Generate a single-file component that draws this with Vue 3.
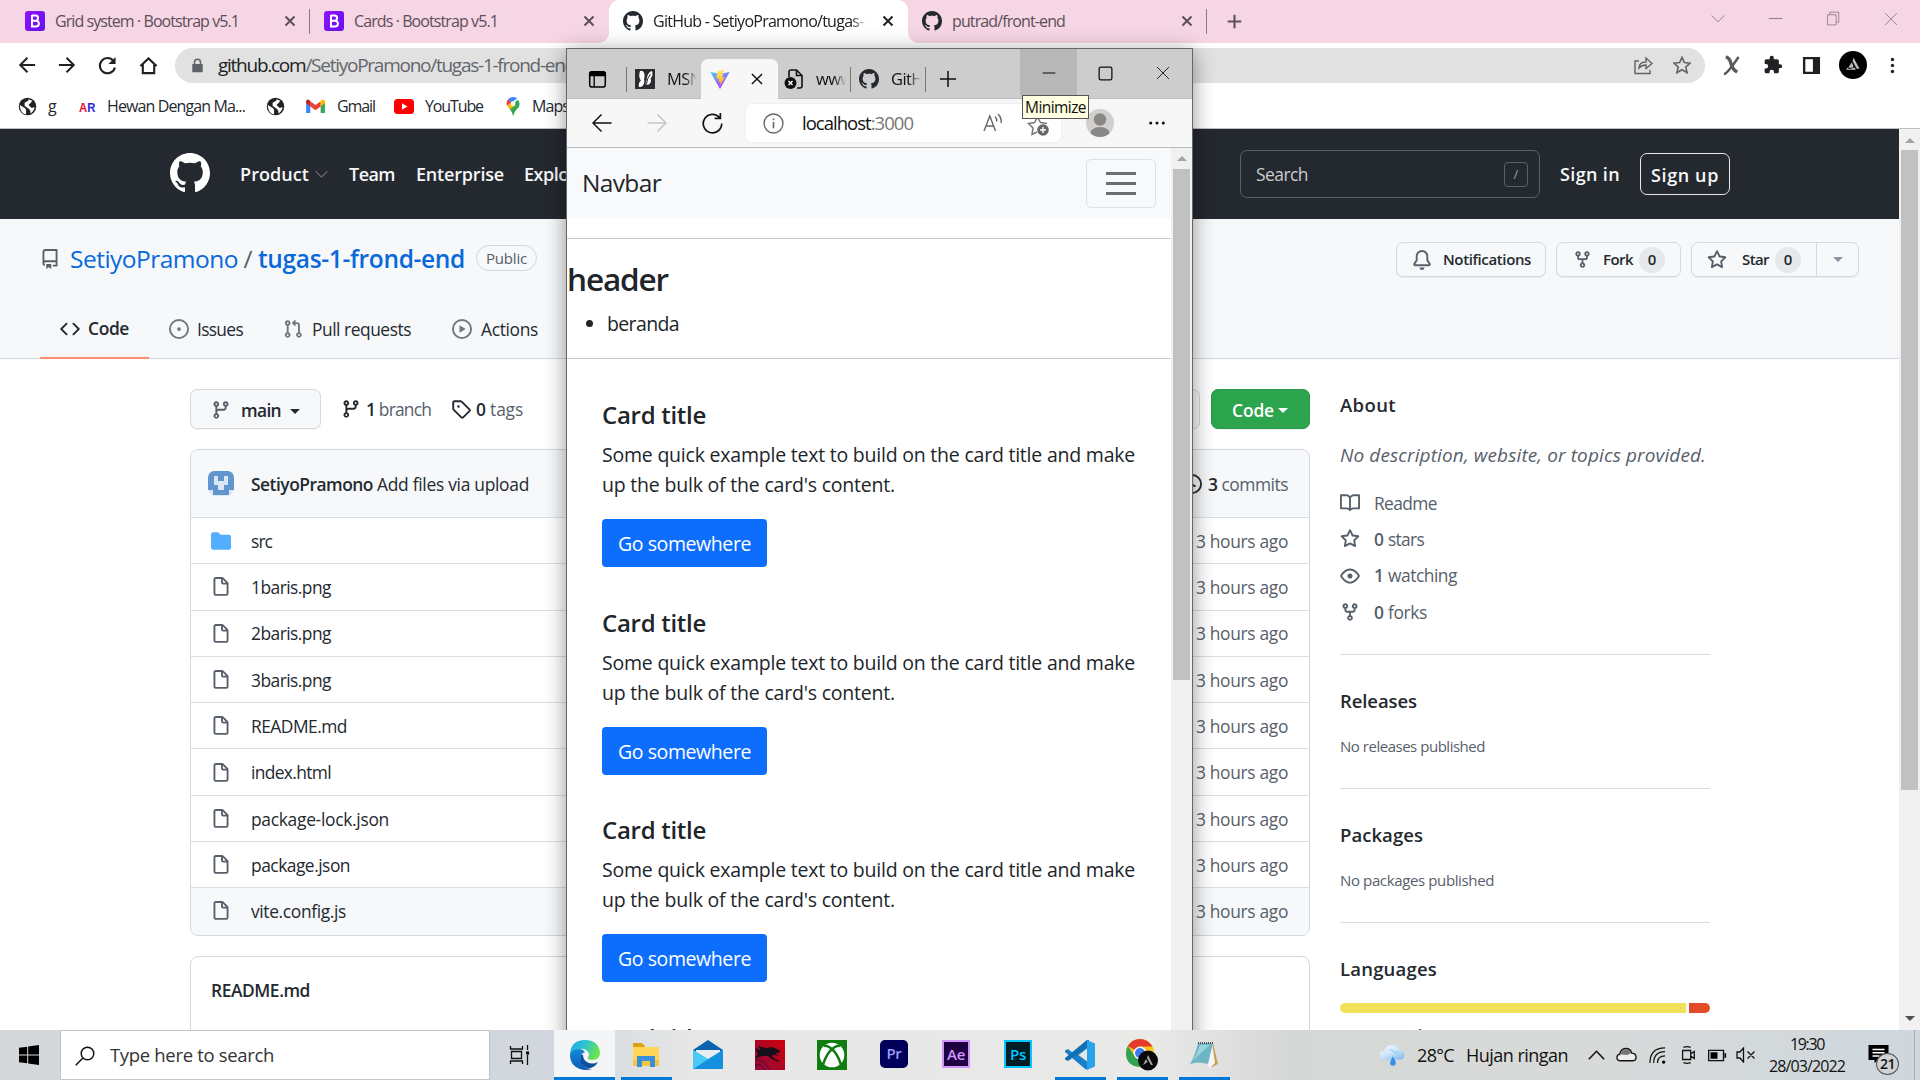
<script setup>
import { h } from 'vue'

const oct = (d) => ['0 0 16 16', `<path fill="currentColor" fill-rule="evenodd" d="${d}"/>`]
const line = (d, w = 1.5, vb = '0 0 20 20') => [vb, `<path fill="none" stroke="currentColor" stroke-width="${w}" d="${d}"/>`]

const icons = {
  github: oct('M8 0C3.58 0 0 3.58 0 8c0 3.54 2.29 6.53 5.47 7.59.4.07.55-.17.55-.38 0-.19-.01-.82-.01-1.49-2.01.37-2.53-.49-2.69-.94-.09-.23-.48-.94-.82-1.13-.28-.15-.68-.52-.01-.53.63-.01 1.08.58 1.23.82.72 1.21 1.87.87 2.33.66.07-.52.28-.87.51-1.07-1.78-.2-3.64-.89-3.64-3.95 0-.87.31-1.59.82-2.15-.08-.2-.36-1.02.08-2.12 0 0 .67-.21 2.2.82.64-.18 1.32-.27 2-.27.68 0 1.36.09 2 .27 1.53-1.04 2.2-.82 2.2-.82.44 1.1.16 1.92.08 2.12.51.56.82 1.27.82 2.15 0 3.07-1.87 3.75-3.65 3.95.29.25.54.73.54 1.48 0 1.07-.01 1.93-.01 2.2 0 .21.15.46.55.38A8.013 8.013 0 0016 8c0-4.42-3.58-8-8-8z'),
  repo: oct('M2 2.5A2.5 2.5 0 014.5 0h8.75a.75.75 0 01.75.75v12.5a.75.75 0 01-.75.75h-2.5a.75.75 0 110-1.5h1.75v-2h-8a1 1 0 00-.714 1.7.75.75 0 01-1.072 1.05A2.495 2.495 0 012 11.5v-9zm10.5-1V9h-8c-.356 0-.694.074-1 .208V2.5a1 1 0 011-1h8zM5 12.25v3.25a.25.25 0 00.4.2l1.45-1.087a.25.25 0 01.3 0L8.6 15.7a.25.25 0 00.4-.2v-3.25a.25.25 0 00-.25-.25h-3.5a.25.25 0 00-.25.25z'),
  code: oct('M4.72 3.22a.75.75 0 011.06 1.06L2.06 8l3.72 3.72a.75.75 0 11-1.06 1.06L.47 8.53a.75.75 0 010-1.06l4.25-4.25zm6.56 0a.75.75 0 10-1.06 1.06L13.94 8l-3.72 3.72a.75.75 0 101.06 1.06l4.25-4.25a.75.75 0 000-1.06l-4.25-4.25z'),
  issue: oct('M8 9.5a1.5 1.5 0 100-3 1.5 1.5 0 000 3zM8 0a8 8 0 100 16A8 8 0 008 0zM1.5 8a6.5 6.5 0 1113 0 6.5 6.5 0 01-13 0z'),
  pull: oct('M7.177 3.073L9.573.677A.25.25 0 0110 .854v4.792a.25.25 0 01-.427.177L7.177 3.427a.25.25 0 010-.354zM3.75 2.5a.75.75 0 100 1.5.75.75 0 000-1.5zm-2.25.75a2.25 2.25 0 113 2.122v5.256a2.251 2.251 0 11-1.5 0V5.372A2.25 2.25 0 011.5 3.25zM11 2.5h-1V4h1a1 1 0 011 1v5.628a2.251 2.251 0 101.5 0V5A2.5 2.5 0 0011 2.5zm1 10.25a.75.75 0 111.5 0 .75.75 0 01-1.5 0zM3.75 12a.75.75 0 100 1.5.75.75 0 000-1.5z'),
  play: oct('M1.5 8a6.5 6.5 0 1113 0 6.5 6.5 0 01-13 0zM8 0a8 8 0 100 16A8 8 0 008 0zM6.379 5.227A.25.25 0 006 5.442v5.117a.25.25 0 00.379.214l4.264-2.559a.25.25 0 000-.428L6.379 5.227z'),
  branch: oct('M11.75 2.5a.75.75 0 100 1.5.75.75 0 000-1.5zm-2.25.75a2.25 2.25 0 113 2.122V6A2.5 2.5 0 0110 8.5H6a1 1 0 00-1 1v1.128a2.251 2.251 0 11-1.5 0V5.372a2.25 2.25 0 111.5 0v1.836A2.492 2.492 0 016 7h4a1 1 0 001-1v-.628A2.25 2.25 0 019.5 3.25zM4.25 12a.75.75 0 100 1.5.75.75 0 000-1.5zM3.5 3.25a.75.75 0 111.5 0 .75.75 0 01-1.5 0z'),
  tag: oct('M2.5 7.775V2.75a.25.25 0 01.25-.25h5.025a.25.25 0 01.177.073l6.25 6.25a.25.25 0 010 .354l-5.025 5.025a.25.25 0 01-.354 0l-6.25-6.25a.25.25 0 01-.073-.177zm-1.5 0V2.75C1 1.784 1.784 1 2.75 1h5.025c.464 0 .91.184 1.238.513l6.25 6.25a1.75 1.75 0 010 2.474l-5.026 5.026a1.75 1.75 0 01-2.474 0l-6.25-6.25A1.75 1.75 0 011 7.775zM6 5a1 1 0 100 2 1 1 0 000-2z'),
  fork: oct('M5 3.25a.75.75 0 11-1.5 0 .75.75 0 011.5 0zm0 2.122a2.25 2.25 0 10-1.5 0v.878A2.25 2.25 0 005.75 8.5h1.5v2.128a2.251 2.251 0 101.5 0V8.5h1.5a2.25 2.25 0 002.25-2.25v-.878a2.25 2.25 0 10-1.5 0v.878a.75.75 0 01-.75.75h-4.5A.75.75 0 015 6.25v-.878zm3.75 7.378a.75.75 0 11-1.5 0 .75.75 0 011.5 0zm3-8.75a.75.75 0 100-1.5.75.75 0 000 1.5z'),
  star: oct('M8 .25a.75.75 0 01.673.418l1.882 3.815 4.21.612a.75.75 0 01.416 1.279l-3.046 2.97.719 4.192a.75.75 0 01-1.088.791L8 12.347l-3.766 1.98a.75.75 0 01-1.088-.79l.72-4.194L.818 6.374a.75.75 0 01.416-1.28l4.21-.611L7.327.668A.75.75 0 018 .25zm0 2.445L6.615 5.5a.75.75 0 01-.564.41l-3.097.45 2.24 2.184a.75.75 0 01.216.664l-.528 3.084 2.769-1.456a.75.75 0 01.698 0l2.77 1.456-.53-3.084a.75.75 0 01.216-.664l2.24-2.183-3.096-.45a.75.75 0 01-.564-.41L8 2.694v.001z'),
  bell: oct('M8 16a2 2 0 001.985-1.75c.017-.137-.097-.25-.235-.25h-3.5c-.138 0-.252.113-.235.25A2 2 0 008 16zM3 5a5 5 0 0110 0v2.947c0 .05.015.098.042.139l1.703 2.555A1.518 1.518 0 0113.482 13H2.518a1.518 1.518 0 01-1.263-2.36l1.703-2.554A.25.25 0 003 7.947V5zm5-3.5A3.5 3.5 0 004.5 5v2.947c0 .346-.102.683-.294.97l-1.703 2.556a.018.018 0 00-.003.01l.001.006.004.006.006.004.007.001h10.964l.007-.001.006-.004.004-.006.001-.007a.017.017 0 00-.003-.01l-1.703-2.554a1.75 1.75 0 01-.294-.97V5A3.5 3.5 0 008 1.5z'),
  book: oct('M0 1.75A.75.75 0 01.75 1h4.253c1.227 0 2.317.59 3 1.501A3.744 3.744 0 0111.006 1h4.245a.75.75 0 01.75.75v10.5a.75.75 0 01-.75.75h-4.507a2.25 2.25 0 00-1.591.659l-.622.621a.75.75 0 01-1.06 0l-.622-.621A2.25 2.25 0 005.258 13H.75a.75.75 0 01-.75-.75V1.75zm8.755 3a2.25 2.25 0 012.25-2.25H14.5v9h-3.757c-.71 0-1.4.201-1.992.572l.004-7.322zm-1.504 7.324l.004-5.073-.002-2.253A2.25 2.25 0 005.003 2.5H1.5v9h3.757a3.75 3.75 0 011.994.574z'),
  eye: oct('M1.679 7.932c.412-.621 1.242-1.75 2.366-2.717C5.175 4.242 6.527 3.5 8 3.5c1.473 0 2.824.742 3.955 1.715 1.124.967 1.954 2.096 2.366 2.717a.119.119 0 010 .136c-.412.621-1.242 1.75-2.366 2.717C10.825 11.758 9.473 12.5 8 12.5c-1.473 0-2.824-.742-3.955-1.715C2.92 9.818 2.09 8.69 1.679 8.068a.119.119 0 010-.136zM8 2c-1.981 0-3.67.992-4.933 2.078C1.797 5.169.88 6.423.43 7.1a1.619 1.619 0 000 1.798c.45.678 1.367 1.932 2.637 3.024C4.329 13.008 6.019 14 8 14c1.981 0 3.67-.992 4.933-2.078 1.27-1.091 2.187-2.345 2.637-3.023a1.619 1.619 0 000-1.798c-.45-.678-1.367-1.932-2.637-3.023C11.671 2.992 9.981 2 8 2zm0 8a2 2 0 100-4 2 2 0 000 4z'),
  clock: oct('M8 0a8 8 0 100 16A8 8 0 008 0zM1.5 8a6.5 6.5 0 1113 0 6.5 6.5 0 01-13 0zm7-3.25a.75.75 0 00-1.5 0v3.5c0 .3.15.55.4.65l2.5 1.4a.75.75 0 10.75-1.3L8.5 7.8z'),
  file: oct('M3.75 1.5a.25.25 0 00-.25.25v11.5c0 .138.112.25.25.25h8.5a.25.25 0 00.25-.25V6H9.75A1.75 1.75 0 018 4.25V1.5H3.75zm5.75.56v2.19c0 .138.112.25.25.25h2.19L9.5 2.06zM2 1.75C2 .784 2.784 0 3.75 0h5.086c.464 0 .909.184 1.237.513l3.414 3.414c.329.328.513.773.513 1.237v8.086A1.75 1.75 0 0112.25 15h-8.5A1.75 1.75 0 012 13.25V1.75z'),
  folder: oct('M1.75 1A1.75 1.75 0 000 2.75v10.5C0 14.216.784 15 1.75 15h12.5A1.75 1.75 0 0016 13.25v-8.5A1.75 1.75 0 0014.25 3h-6.5a.25.25 0 01-.2-.1l-.9-1.2c-.33-.44-.85-.7-1.4-.7h-3.5z'),
  close: line('M5 5L15 15M15 5L5 15', 2.2),
  thinClose: line('M1.5 1.5L18.5 18.5M18.5 1.5L1.5 18.5', 1.3),
  tabClose: line('M1.5 1.5L18.5 18.5M18.5 1.5L1.5 18.5', 2.4),
  plus: line('M10 2V18M2 10H18', 2.4),
  thinPlus: line('M10 1V19M1 10H19', 1.7),
  chevDown: line('M1 5L10 14L19 5', 1.4),
  chevUp: line('M1 14.500L10 5L19 14.500', 1.8),
  minus: line('M1 10H19', 1.5),
  restore: line('M2 5H13.500V18.500H2ZM5 5V1.500H17V15H13.500', 1.2),
  maximize: ['0 0 20 20', '<rect x="2.500" y="2.500" width="15" height="15" rx="2" fill="none" stroke="currentColor" stroke-width="1.500"/>'],
  back: line('M19 10H3M10.500 2L2.500 10L10.500 18', 2.2),
  forward: line('M1 10H17M9.500 2L17.500 10L9.500 18', 2.2),
  thinBack: line('M19.500 10H1.500M9.500 1.500L1 10L9.500 18.500', 1.5),
  thinForward: line('M.5 10H18.500M10.500 1.500L19 10L10.500 18.500', 1.5),
  reload: ['0 0 20 20', '<path fill="none" stroke="currentColor" stroke-width="2.200" d="M16.500 5.500A8 8 0 1 0 17.800 12"/><path fill="currentColor" d="M18.500 1V8.500H11Z"/>'],
  thinReload: line('M16.800 4.500A8.800 8.800 0 1 0 18.800 10M17.500 0V5.200H12', 1.6),
  home: line('M1.500 10.500L10 2.500L18.500 10.500M4 8.500V18H16V8.500', 2.2),
  lock: ['0 0 20 20', '<path fill="currentColor" d="M4 8H16Q17 8 17 9V18Q17 19 16 19H4Q3 19 3 18V9Q3 8 4 8Z"/><path fill="none" stroke="currentColor" stroke-width="2" d="M6 9V5.500A4 4 0 0 1 14 5.500V9"/>'],
  share: line('M6 6H2V18.500H17V15M6 13Q6 7 13 7V3L19 8.500L13 13.500V10Q8.500 10 6 13Z', 1.4),
  starLine: line('M10 1.500L12.600 7.300L19 8L14.200 12.200L15.600 18.500L10 15.200L4.400 18.500L5.800 12.200L1 8L7.400 7.300Z', 1.8),
  xmark: ['0 0 20 20', '<path fill="none" stroke="#5a5a5a" stroke-width="3.600" d="M4 1Q8 2 9.500 8T16 17"/><path fill="none" stroke="#5a5a5a" stroke-width="2.600" d="M17.500 1Q12 9 8 14T2 19"/>'],
  puzzle: ['0 0 24 24', '<path fill="currentColor" d="M20.500 11H19V7a2 2 0 0 0-2-2h-4V3.500a2.500 2.500 0 0 0-5 0V5H4a2 2 0 0 0-2 2v3.800h1.500a2.700 2.700 0 0 1 0 5.400H2V20a2 2 0 0 0 2 2h3.800v-1.500a2.700 2.700 0 0 1 5.400 0V22H17a2 2 0 0 0 2-2v-4h1.500a2.500 2.500 0 0 0 0-5z"/>'],
  panel: ['0 0 20 20', '<path fill="currentColor" fill-rule="evenodd" d="M1 1H19V19H1ZM3.500 3.500V16.500H11.500V3.500Z"/>'],
  profile: ['0 0 30 30', '<circle cx="15" cy="15" r="15" fill="#000"/><path fill="#bbb" d="M15.500 7L22 19H19L14.500 11ZM13.500 12L15.500 16L13.500 19H9.500ZM7.500 20H18L17 18H9Z"/>'],
  dotsV: ['0 0 20 20', '<g fill="currentColor"><circle cx="10" cy="3" r="2"/><circle cx="10" cy="10" r="2"/><circle cx="10" cy="17" r="2"/></g>'],
  dotsH: ['0 0 20 20', '<g fill="currentColor"><circle cx="3" cy="10" r="1.700"/><circle cx="10" cy="10" r="1.700"/><circle cx="17" cy="10" r="1.700"/></g>'],
  bootstrap: ['0 0 20 20', '<defs><linearGradient id="bs" x2="1" y2="1"><stop stop-color="#9013fe"/><stop offset="1" stop-color="#6610f2"/></linearGradient></defs><rect width="20" height="20" rx="3" fill="url(#bs)"/><path fill="none" stroke="#fff" stroke-width="2" d="M7 4.500H10.500A2.600 2.600 0 0 1 10.500 9.700H7M7 9.700H11A2.900 2.900 0 0 1 11 15.500H7ZM7 4V16"/>'],
  globe: ['0 0 20 20', '<circle cx="10" cy="10" r="9.200" fill="#202124"/><path fill="#fff" d="M2 8.500L7 11.500Q8.500 12.500 8.500 14V18.300Q2.500 17 2 10ZM7 6L11 3.800V2.300L15 4L13 6.500L11 8.500L14.500 11.500L17.500 10.500Q17 15 13 17.300V14.500L11 12L7 9.500Z"/>'],
  ar: ['0 0 22 20', '<text x="0" y="15.500" font-family="Liberation Sans,sans-serif" font-weight="700" font-size="14" textLength="18" lengthAdjust="spacingAndGlyphs"><tspan fill="#e8112d">A</tspan><tspan fill="#2b2bd8">R</tspan></text>'],
  gmail: ['0 0 20 16', '<path fill="#4285f4" d="M0 2V15H4.500V6Z"/><path fill="#34a853" d="M20 2V15H15.500V6Z"/><path fill="#ea4335" d="M4.500 2.500V8L10 12L15.500 8V2.500L10 6.500Z"/><path fill="#c5221f" d="M0 2.500Q.5-.5 3 .800L4.500 2V7.800L0 4.500Z"/><path fill="#fbbc04" d="M20 2.500Q19.500-.5 17 .800L15.500 2V7.800L20 4.500Z"/>'],
  youtube: ['0 0 20 15', '<rect width="20" height="15" rx="3.500" fill="#f00"/><path fill="#fff" d="M8 4.200L13.500 7.500L8 10.800Z"/>'],
  maps: ['0 0 14 20', '<path fill="#34a853" d="M7 20Q6 15 3.500 12.500L11.500 3Q14 4 14 7.500Q14 10 11 13Q8.500 15.500 7 20Z"/><path fill="#fbbc04" d="M3.500 13Q1.500 10.500 .8 9L5 5.500L9.500 9Z"/><path fill="#ea4335" d="M.8 9Q-.8 5 2 2L5.500 5.500Z"/><path fill="#4285f4" d="M2 2Q6-1.500 11.500 1.200L5.300 6Z"/><circle cx="7" cy="7" r="2.500" fill="#fff"/>'],
  workspace: ['0 0 20 20', '<rect x="1.800" y="2" width="16.400" height="16" rx="2.500" fill="none" stroke="#000" stroke-width="1.600"/><path d="M1 6.500V4Q1 1 4 1H16Q19 1 19 4V6.500Z"/><path stroke="#000" stroke-width="1.400" d="M6.500 6V18"/>'],
  msn: ['0 0 20 20', '<rect width="20" height="20" fill="#2b2d31"/><path fill="#fff" d="M5 2Q9 1 9.500 6Q9.800 8 9 10Q10 12 9 14.500Q7.500 18.500 4 18Q3 14 6 11.500Q3 8 5 2ZM17 2Q18.500 6.500 15.500 9.500Q17 12 15 14.500Q12.500 17 10.500 14.500Q12 11 12 8.500Q13 3 17 2Z"/><path fill="none" stroke="#2b2d31" stroke-width="1" d="M15.500 5Q12 9 11.500 15"/>'],
  vite: ['0 0 20 20', '<defs><linearGradient id="vt" x2=".6" y2="1"><stop stop-color="#41d1ff"/><stop offset="1" stop-color="#bd34fe"/></linearGradient><linearGradient id="vl" x2="0" y2="1"><stop stop-color="#ffea83"/><stop offset="1" stop-color="#ffa800"/></linearGradient></defs><path fill="url(#vt)" d="M.3 3L10 20L19.700 3L10.500 4.700Z"/><path fill="url(#vl)" d="M14 .5L7 2L6.500 10L9 9.500L8.500 13L10.500 12.500L9.500 17L15 8L12.300 8.500Z"/>'],
  badPage: ['0 0 20 20', '<path fill="none" stroke="#111" stroke-width="1.600" d="M5 8V3Q5 1 7 1H12.500L18 6.500V17Q18 19 16 19H13M12.500 1V6.500H18"/><circle cx="6.500" cy="14" r="6" fill="#111"/><path stroke="#fff" stroke-width="1.400" d="M4.500 12L8.500 16M8.500 12L4.500 16"/>'],
  info: ['0 0 20 20', '<circle cx="10" cy="10" r="9" fill="none" stroke="currentColor" stroke-width="1.300"/><path stroke="currentColor" stroke-width="1.500" d="M10 8.500V14.500M10 5.200V7"/>'],
  readAloud: ['0 0 20 20', '<path fill="none" stroke="currentColor" stroke-width="1.400" d="M1 18L6.800 3L12.500 18M3 13H10.800M12 3.500Q14 5.500 13.700 8.500M15 1Q19 5 18 10"/>'],
  favAdd: ['0 0 22 22', '<path fill="none" stroke="#767676" stroke-width="1.500" d="M10 18L5 20.500L6 14L1.500 9.500L7.500 8.500L10.500 3L13.500 8.500L20 9.500"/><circle cx="16" cy="16" r="5.800" fill="#666"/><path stroke="#fff" stroke-width="1.400" d="M16 13V19M13 16H19"/>'],
  person: ['0 0 28 28', '<clipPath id="pc"><circle cx="14" cy="14" r="14"/></clipPath><g clip-path="url(#pc)"><rect width="28" height="28" fill="#d2d0ce"/><circle cx="14" cy="10.500" r="6.200" fill="#8a8886"/><ellipse cx="14" cy="25" rx="10" ry="7" fill="#8a8886"/></g>'],
  avatar: ['0 0 28 28', '<rect x="1" y="1" width="26" height="25" rx="8" fill="#d9e6f5"/><path fill="#6095ce" fill-rule="evenodd" d="M7 1H21Q27 2 27 8V20H22V25H6V20H1V8Q1 2 7 1ZM7 6V15H11V20H17V15H21V6H17V11H11V6Z"/>'],
  windows: ['0 0 20 20', '<path d="M0 2.800L8.200 1.700V9.500H0ZM9.200 1.500L20 0V9.500H9.200ZM0 10.500H8.200V18.300L0 17.200ZM9.200 10.500H20V20L9.200 18.500Z"/>'],
  search: ['0 0 20 20', '<circle cx="12.500" cy="7.500" r="6.300" fill="none" stroke="#111" stroke-width="1.500"/><path stroke="#111" stroke-width="1.500" d="M8 12L.7 19.300"/>'],
  taskview: ['0 0 20 20', '<path fill="none" stroke="#111" stroke-width="1.300" d="M1 1V4H13V1M1 19V16H13V19M2 6.500H12V13.500H2ZM18 0V5M18 10V20"/><rect x="16.600" y="6.500" width="3" height="3"/>'],
  edge: ['0 0 30 30', '<defs><linearGradient id="eg" x2="1" y2=".4"><stop stop-color="#1fa3e8"/><stop offset=".5" stop-color="#2cc3d5"/><stop offset="1" stop-color="#6be34f"/></linearGradient><linearGradient id="eb" x2="0" y2="1"><stop stop-color="#1489d8"/><stop offset="1" stop-color="#0a5bb5"/></linearGradient></defs><path fill="url(#eg)" d="M0 14Q1 0 15 0Q28 0 30 12Q30 20 22 20Q17 20 18 17Q20 15 18 12Q15 8 10 9Q3 10 0 16Z"/><path fill="url(#eb)" d="M0 16Q1 9 9 9Q13 9 15 12Q10 14 11 20Q13 29 22 29Q16 31 10 29Q0 25 0 16Z"/><path fill="#0d4f9e" d="M11 15Q9 25 17 28Q24 29 28 22Q22 25 17 22Q13 20 13 15Z"/>'],
  explorer: ['0 0 28 26', '<path fill="#e0a013" d="M1 1H10L13 4V8H1Z"/><path fill="#ffd65a" d="M1 5H27V24H1Z"/><path fill="#f8c63d" d="M1 18H27V24H1Z"/><path fill="#3a8fd9" d="M5 14H23V25H18V19H10V25H5Z"/>'],
  mail: ['0 0 30 30', '<path fill="#0a64ad" d="M0 10L15 0L30 10V13H0Z"/><path fill="#e9eef2" d="M3 10H27V18H3Z"/><path fill="#35b8f1" d="M0 10L15 19L30 10V29H0Z"/><path fill="#1490df" d="M0 29L30 10V29Z"/><path fill="#4cc9f7" d="M0 10L15 19L0 29Z"/>'],
  dragon: ['0 0 30 30', '<defs><linearGradient id="dg" x1="1" x2="0" y2="1"><stop stop-color="#d0000b"/><stop offset="1" stop-color="#8d0b3c"/></linearGradient></defs><rect width="30" height="30" fill="url(#dg)"/><path fill="#17101a" d="M0 8L6 10L3 6Q9 8 12 8L16 7L20 8L25 11L24 13L20 13L24 16L18 14.500Q16 17 20 19Q24 20 25 22Q17 20 13 16L8 16L0 18L3 14Z"/><path fill="none" stroke="#4d0a3a" d="M0 20Q8 18 14 29M0 25Q6 23 10 30"/>'],
  xbox: ['0 0 30 30', '<rect width="30" height="30" fill="#107c10"/><circle cx="15" cy="15" r="12.300" fill="#fff"/><path fill="none" stroke="#107c10" stroke-width="2.400" d="M6.500 5.500Q11 5.500 15 9Q20.500 14 24 24.500M23.500 5.500Q19 5.500 15 9Q9.500 14 6 24.500"/>'],
  vscode: ['0 0 30 30', '<path fill="#1a7fc6" d="M22 0L8 13L3 9L0 10.500V12L19 28L22 30L24 22V8Z"/><path fill="#1070b3" d="M0 18V19.500L3 21L24 6V0H22Z"/><path fill="#2aa3ee" d="M22 0L30 3.500V26.500L22 30Z"/><path fill="#e6e6e6" d="M22 8.500V21.500L13.500 15Z"/>'],
  chrome: ['0 0 32 32', '<circle cx="14" cy="14" r="14" fill="#fbc116"/><path fill="#e33b2e" d="M14 14L1.800 7Q6 0 14 0Q22 0 26.500 7.500H14Z"/><path fill="#31a350" d="M14 28Q0 27 0 14Q0 10 1.800 7L9 17.500L16 20Z"/><circle cx="14" cy="14" r="6.500" fill="#fff"/><circle cx="14" cy="14" r="5" fill="#3b7ded"/><circle cx="22" cy="21.500" r="10" fill="#0a0a0a"/><path fill="#aaa" d="M22 16L27 26H25L21 19ZM20 20L21.500 23L17 26Z"/>'],
  notepad: ['0 0 28 28', '<path fill="#c8a252" d="M23 2L28 23L22 26L17 23Z"/><path fill="#f4f6f7" d="M22 2L25 22L20 27L16 22Z"/><path fill="#6fb6c5" d="M8 2H23L18 23Q8 20 0 23Q5 15 8 2Z"/><path fill="#9cd3de" d="M10 4L20 4Q10 12 3 20Q7 13 10 4Z"/><path stroke="#555" stroke-dasharray="1 1" stroke-width="2" d="M8 2H24"/>'],
  weather: ['0 0 26 22', '<defs><linearGradient id="wc" x2=".7" y2="1"><stop stop-color="#f4fbff"/><stop offset=".55" stop-color="#cfe7fa"/><stop offset="1" stop-color="#8fc1ee"/></linearGradient></defs><path fill="url(#wc)" d="M6 15.500Q0 15.500 0 10.500Q0 6.500 5 6Q7 0 13 0Q19 0 20.500 5Q26 5.500 26 10.500Q26 15.500 21 15.500Z"/><path fill="#a5d0f3" d="M9 5Q13 3 16 7Q20 5 23 8Q18 7 16 10Q13 5 9 5Z"/><path fill="#3292e8" d="M14 12Q17 17 17 18.700A3 3 0 0 1 11 18.700Q11 17 14 12Z"/>'],
  cloud: ['0 0 22 16', '<path fill="#eee" stroke="#111" stroke-width="1.400" d="M5 14Q1 14 1 10.500Q1 7.500 4 7Q5 1.500 10 1.200Q15 1 16.500 6Q21 6 21 10.500Q21 14 17 14Z"/><path fill="#777" d="M2 10Q3 7.500 6 7.500L12 8Q14 6 16 6.500Q14 2 10 2Q6 2 5 7Z"/>'],
  wifi: ['0 0 18 18', '<g fill="none" stroke="#111" stroke-width="1.300"><path d="M1 17Q1 1 17 1M5 17Q5 5 17 5M9 17Q9 9.500 17 9.500"/></g><circle cx="15.500" cy="16" r="1.800"/>'],
  meet: ['0 0 18 20', '<path fill="none" stroke="#111" stroke-width="1.400" d="M3 5H12V15H3ZM12 9L16 6V14L12 11M4 1.500Q8 0 12 1.500M4 18.500Q8 20 12 18.500"/>'],
  battery: ['0 0 20 14', '<path fill="none" stroke="#111" stroke-width="1.400" d="M1 1.500H17V12.500H1Z"/><path d="M3 3.500H10.500V10.500H3ZM18 4.500H19.800V9.500H18Z"/>'],
  volume: ['0 0 20 16', '<path fill="none" stroke="#111" stroke-width="1.300" d="M1 5H4L7.500 1V15L4 11H1ZM11.500 4.500L18.500 11.500M18.500 4.500L11.500 11.500"/>'],
  action: ['0 0 20 18', '<path d="M0 0H20V15H10L6 18V15H0Z"/><path stroke="#fff" stroke-width="1.400" d="M4 4.500H16M4 7.700H16M4 11H11"/>'],
}

const Icon = ({ name, w = 20, ht }) =>
  h('svg', { class: 'ico', viewBox: icons[name][0], width: w, height: ht ?? w, innerHTML: icons[name][1] })
Icon.props = ['name', 'w', 'ht']

// Tracks a label out (or in) so that it fills the given width in pixels.
const vFit = {
  mounted(el, { value }) {
    const width = el.getBoundingClientRect().width
    const count = el.textContent.length
    el.style.letterSpacing = `${((value - width) / count).toFixed(3)}px`
  },
}

const tabs = [
  { icon: 'bootstrap', title: 'Grid system · Bootstrap v5.1', w: 184, sep: true },
  { icon: 'bootstrap', title: 'Cards · Bootstrap v5.1', w: 144 },
  { icon: 'github', title: 'GitHub - SetiyoPramono/tugas-1', w: 219, active: true },
  { icon: 'github', title: 'putrad/front-end', w: 113, sep: true },
]
const files = [
  ['src', 21], ['1baris.png', 80], ['2baris.png', 80], ['3baris.png', 80], ['README.md', 96],
  ['index.html', 80], ['package-lock.json', 138], ['package.json', 99], ['vite.config.js', 95],
]
const facts = [
  { icon: 'book', text: 'Readme', w: 63 },
  { icon: 'star', n: '0', text: 'stars', w: 36 },
  { icon: 'eye', n: '1', text: 'watching', w: 69 },
  { icon: 'fork', n: '0', text: 'forks', w: 39 },
]
const apps = [
  { icon: 'edge', w: 30, state: 'active' },
  { icon: 'explorer', w: 28, state: 'open' },
  { icon: 'mail', w: 30 },
  { icon: 'dragon', w: 30 },
  { icon: 'xbox', w: 30 },
  { label: 'Pr', kind: 'pr' },
  { label: 'Ae', kind: 'ae' },
  { label: 'Ps', kind: 'ps' },
  { icon: 'vscode', w: 30, state: 'open' },
  { icon: 'chrome', w: 32, state: 'open' },
  { icon: 'notepad', w: 28, state: 'open' },
]
</script>

<template>
  <div class="desktop">
    <main class="chrome">
      <div class="tabstrip">
        <div v-for="t in tabs" :key="t.title" class="tab" :class="{ active: t.active, sep: t.sep }">
          <Icon :name="t.icon" />
          <span class="tab-title"><span v-fit="t.w">{{ t.title }}</span></span>
          <Icon name="close" w="18" />
        </div>
        <Icon name="plus" w="17" class="newtab" />
        <div class="wincontrols">
          <Icon name="chevDown" w="14" /><Icon name="minus" w="15" /><Icon name="restore" w="15" /><Icon name="thinClose" w="14" />
        </div>
      </div>
      <div class="toolbar">
        <div class="navicons"><Icon name="back" w="18" /><Icon name="forward" w="18" /><Icon name="reload" w="19" /><Icon name="home" w="19" /></div>
        <div class="omnibox">
          <Icon name="lock" w="15" />
          <span class="url" v-fit="357">github.com<span>/SetiyoPramono/tugas-1-frond-end</span></span>
          <Icon name="share" w="20" class="push" /><Icon name="starLine" w="18" class="fav" />
        </div>
        <div class="exts">
          <Icon name="xmark" w="19" ht="21" /><Icon name="puzzle" w="20" /><Icon name="panel" w="19" /><Icon name="profile" w="28" /><Icon name="dotsV" w="17" />
        </div>
      </div>
      <div class="bookmarks">
        <Icon name="globe" w="19" /><span>g</span>
        <Icon name="ar" w="20" /><span><span v-fit="138">Hewan Dengan Ma...</span></span>
        <Icon name="globe" w="19" />
        <Icon name="gmail" w="19" ht="15" /><span><span v-fit="38">Gmail</span></span>
        <Icon name="youtube" w="20" ht="15" /><span><span v-fit="58">YouTube</span></span>
        <Icon name="maps" w="14" ht="19" /><span><span v-fit="37">Maps</span></span>
      </div>

      <div class="viewport">
        <div class="page">
          <header class="gh-header">
            <Icon name="github" w="40" />
            <b><span v-fit="69">Product</span></b><Icon name="chevDown" w="13" class="dim" />
            <b><span v-fit="46">Team</span></b>
            <b><span v-fit="88">Enterprise</span></b>
            <b><span v-fit="62">Explore</span></b>
            <div class="gh-search"><span v-fit="52">Search</span><i>/</i></div>
            <b><span v-fit="60">Sign in</span></b>
            <div class="signup"><span v-fit="68">Sign up</span></div>
          </header>

          <section class="repohead">
            <div class="repotitle">
              <Icon name="repo" w="20" />
              <a><span v-fit="168">SetiyoPramono</span></a><span class="slash">/</span>
              <a class="strong"><span v-fit="207">tugas-1-frond-end</span></a>
              <span class="pill"><span v-fit="41">Public</span></span>
              <div class="actions">
                <div class="btn notif"><Icon name="bell" w="20" /><span v-fit="88">Notifications</span></div>
                <div class="btn forkbtn"><Icon name="fork" w="19" /><span v-fit="30">Fork</span><em>0</em></div>
                <div class="btn starbtn"><Icon name="star" w="20" /><span v-fit="27">Star</span><em>0</em><div class="drop"><s class="caret"></s></div></div>
              </div>
            </div>
            <nav class="repotabs">
              <span class="on"><Icon name="code" w="20" /><span v-fit="41">Code</span></span>
              <span><Icon name="issue" w="20" /><span v-fit="46">Issues</span></span>
              <span><Icon name="pull" w="20" /><span v-fit="99">Pull requests</span></span>
              <span><Icon name="play" w="20" /><span v-fit="57">Actions</span></span>
            </nav>
          </section>

          <div class="content">
            <div class="maincol">
              <div class="filenav">
                <div class="btn mainbtn"><Icon name="branch" w="20" /><span v-fit="40">main</span><s class="caret"></s></div>
                <Icon name="branch" w="20" class="ink" /><span class="cnt"><span v-fit="65"><b>1</b> branch</span></span>
                <Icon name="tag" w="20" class="ink" /><span class="cnt"><span v-fit="47"><b>0</b> tags</span></span>
                <div class="btn goto"></div>
                <div class="btn green"><span v-fit="42">Code</span><s class="caret"></s></div>
              </div>
              <div class="files">
                <div class="commit">
                  <Icon name="avatar" w="28" />
                  <b><span v-fit="122">SetiyoPramono</span></b><span v-fit="152">Add files via upload</span>
                  <Icon name="clock" w="20" class="push" /><span class="cnt" v-fit="80"><b>3</b> commits</span>
                </div>
                <div v-for="(f, i) in files" :key="f[0]" class="file">
                  <Icon :name="i ? 'file' : 'folder'" w="20" :class="i ? 'doc' : 'dir'" />
                  <span class="fname"><span v-fit="f[1]">{{ f[0] }}</span></span>
                  <span class="ago"><span v-fit="92">3 hours ago</span></span>
                </div>
              </div>
              <div class="readme"><span v-fit="99">README.md</span></div>
            </div>

            <aside class="side">
              <h3><span v-fit="56">About</span></h3>
              <p class="desc"><span v-fit="366">No description, website, or topics provided.</span></p>
              <div class="facts">
                <div v-for="f in facts" :key="f.text"><Icon :name="f.icon" w="20" /><b v-if="f.n">{{ f.n }}</b><span v-fit="f.w">{{ f.text }}</span></div>
              </div>
              <section><h3><span v-fit="77">Releases</span></h3><p><span v-fit="145">No releases published</span></p></section>
              <section><h3><span v-fit="83">Packages</span></h3><p><span v-fit="154">No packages published</span></p></section>
              <section>
                <h3><span v-fit="97">Languages</span></h3>
                <div class="langbar"><i></i><i></i></div>
                <div class="langs"><i></i><b>JavaScript</b> 94.3%<i class="html"></i><b>HTML</b> 5.7%</div>
              </section>
            </aside>
          </div>
        </div>
        <div class="scroll"><s class="up"></s><div class="thumb"></div><s class="down"></s></div>
      </div>
    </main>

    <div class="edge">
      <div class="etabs">
        <Icon name="workspace" w="19" /><i class="bar"></i>
        <Icon name="msn" w="20" /><span class="fade"><span>MSN</span></span>
        <div class="etab"><Icon name="vite" w="20" /><Icon name="tabClose" w="12" /></div>
        <Icon name="badPage" w="20" /><span class="fade"><span>www</span></span><i class="bar"></i>
        <Icon name="github" w="20" class="ink" /><span class="fade"><span>GitHu</span></span><i class="bar"></i>
        <Icon name="thinPlus" w="18" />
        <div class="wbtn hover"><Icon name="minus" w="14" /></div>
        <div class="wbtn"><Icon name="maximize" w="17" /></div>
        <div class="wbtn"><Icon name="thinClose" w="14" /></div>
      </div>
      <div class="ebar">
        <Icon name="thinBack" w="20" /><Icon name="thinForward" w="20" class="off" /><Icon name="thinReload" w="21" />
        <div class="eaddr">
          <Icon name="info" w="21" /><span class="host"><span v-fit="111">localhost<i>:3000</i></span></span>
          <Icon name="readAloud" w="20" /><Icon name="favAdd" w="22" />
        </div>
        <Icon name="person" w="28" /><Icon name="dotsH" w="18" />
      </div>
      <div class="ebody">
        <div class="app">
          <div class="navbar"><span v-fit="79">Navbar</span><div class="burger"><i></i><i></i><i></i></div></div>
          <div class="head">
            <h2><span v-fit="101">header</span></h2>
            <ul><li><span v-fit="72">beranda</span></li></ul>
          </div>
          <div class="cards">
            <article v-for="n in 4" :key="n">
              <h5><span v-fit="104">Card title</span></h5>
              <p><span v-fit="533">Some quick example text to build on the card title and make</span><br><span v-fit="293">up the bulk of the card's content.</span></p>
              <div class="go"><span v-fit="133">Go somewhere</span></div>
            </article>
          </div>
        </div>
        <div class="scroll"><s class="up"></s><div class="thumb"></div></div>
      </div>
      <div class="tip"><span v-fit="61">Minimize</span></div>
    </div>

    <footer class="taskbar">
      <div class="start"><Icon name="windows" w="20" /></div>
      <div class="tsearch"><Icon name="search" w="20" /><span v-fit="164">Type here to search</span></div>
      <div class="tview"><Icon name="taskview" w="21" ht="20" /></div>
      <div v-for="(a, i) in apps" :key="i" class="app-slot" :class="a.state">
        <Icon v-if="a.icon" :name="a.icon" :w="a.w" />
        <div v-else class="adobe" :class="a.kind">{{ a.label }}</div>
      </div>
      <div class="tray">
        <Icon name="weather" w="26" ht="21" />
        <span><span v-fit="37">28°C</span></span><span><span v-fit="102">Hujan ringan</span></span>
        <Icon name="chevUp" w="17" /><Icon name="cloud" w="21" ht="16" /><Icon name="wifi" w="17" /><Icon name="meet" w="18" /><Icon name="battery" w="20" ht="13" /><Icon name="volume" w="20" ht="16" />
        <div class="clock"><span v-fit="34">19:30</span><span v-fit="76">28/03/2022</span></div>
        <div class="notes"><Icon name="action" w="21" ht="18" /><i>21</i></div>
      </div>
    </footer>
  </div>
</template>

<style>
body { margin: 0; overflow: hidden; }
</style>

<style scoped>
* { box-sizing: border-box; }
.desktop { position: relative; width: 1920px; height: 1080px; overflow: hidden; background: #fff; color: #24292f; font: 400 17.4px/1.3 "Open Sans", "Noto Sans", sans-serif; white-space: nowrap; display: flex; flex-direction: column; }
.desktop i, .desktop em { font-style: normal; }
.ico { display: block; flex: none; }
.push { margin-left: auto; }
.ink { color: #24292f; }

.chrome { height: 1030px; display: flex; flex-direction: column; overflow: hidden; }
.tabstrip { height: 43px; flex: none; display: flex; align-items: center; background: #f6d5e4; padding: 0 0 0 11px; color: #5c4f57; }
.tab { position: relative; width: 299px; height: 43px; padding: 0 11px 1px 14px; display: flex; align-items: center; gap: 10px; font-size: 16px; }
.tab > .ico:first-child { color: #24292f; }
.tab.active { background: #fff; color: #202124; border-radius: 10px 10px 0 0; }
.tab.active::before, .tab.active::after { content: ""; position: absolute; bottom: 0; width: 10px; height: 10px; }
.tab.active::before { left: -10px; background: radial-gradient(circle at 0 0, transparent 9.5px, #fff 10px); }
.tab.active::after { right: -10px; background: radial-gradient(circle at 100% 0, transparent 9.5px, #fff 10px); }
.tab.active .tab-title { mask-image: linear-gradient(to right, #000 92%, transparent 99%); }
.tab.sep::after { content: ""; position: absolute; right: 0; top: 9px; width: 1px; height: 25px; background: #8d7a84; }
.tab-title { flex: 1; overflow: hidden; }
.newtab { margin-left: 19px; }
.wincontrols { margin: 0 22px 6px auto; display: flex; align-items: center; gap: 43px; color: #9a7f8d; }
.toolbar { height: 44px; flex: none; display: flex; align-items: center; color: #202124; }
.navicons { display: flex; gap: 22px; width: 175px; padding-left: 18px; align-items: center; }
.omnibox { width: 1530px; height: 35px; border-radius: 18px; background: #e1e1e1; display: flex; align-items: center; padding: 0 14px; color: #5f6368; }
.omnibox > .ico:first-child { margin: 0 13px 0 1px; }
.url { font-size: 19px; color: #202124; }
.url span { color: #63676c; }
.fav { margin-left: 20px; }
.exts { display: flex; align-items: center; gap: 19px; padding-left: 17px; }
.exts .ico:nth-child(1) { margin-right: 3px; }
.exts .ico:nth-child(4) { margin-left: -1px; }
.exts .ico:nth-child(5) { margin-left: -2px; }
.bookmarks { height: 42px; flex: none; border-bottom: 1px solid #bfbfbf; display: grid; grid-template-columns: 30px 31px 28px 159px 40px 31px 57px 31px 81px 26px 60px; align-items: center; padding: 0 0 2px 18px; font-size: 16px; }

.viewport { height: 901px; display: flex; }
.page { width: 1899px; overflow: hidden; height: 901px; }
.scroll { width: 21px; background: #f1f1f1; display: flex; flex-direction: column; align-items: center; height: 901px; }
.scroll s { border: 5px solid transparent; width: 0; height: 0; flex: none; }
.scroll .up { border-bottom-color: #a3a3a3; border-top: 0; margin: 9px 0 7px; }
.scroll .down { border-top-color: #505050; border-bottom: 0; margin: auto 0 9px; }
.thumb { width: 17px; height: 640px; background: #c1c1c1; }

.gh-header { height: 90px; background: #24292f; color: #fff; display: grid; grid-template-columns: 70px 75px 34px 67px 108px 716px 320px 80px 100px; align-items: center; padding: 0 0 3px 170px; }
.gh-header b { font-weight: 600; font-size: 18px; margin-top: 4px; color: #f6f7f8; }
.dim { color: #9da0a4; margin-top: 3px; }
.gh-search { width: 300px; height: 48px; border: 1px solid #57606a; border-radius: 7px; display: flex; align-items: center; justify-content: space-between; padding: 1px 11px 0 15px; color: #c9cccf; font-size: 17.4px; margin-top: 3px; }
.gh-search i { width: 24px; height: 25px; border: 1px solid #57606a; border-radius: 4px; font-size: 13px; text-align: center; line-height: 23px; color: #9da0a4; }
.signup { width: 90px; height: 42px; border: 1px solid #e6e8ea; border-radius: 7px; font-weight: 600; font-size: 18px; padding-left: 10px; line-height: 42px; margin-top: 3px; color: #f6f7f8; }

.repohead { height: 140px; background: #f6f8fa; border-bottom: 1px solid #d0d7de; display: flex; flex-direction: column; justify-content: space-between; }
.repotitle { display: flex; align-items: center; height: 40px; margin-top: 20px; padding-left: 40px; color: #57606a; font-size: 24.500px; }
.repotitle > .ico { margin-right: 10px; }
.repotitle a { color: #0969da; }
.repotitle .slash { width: 20px; text-align: center; }
.repotitle .strong { font-weight: 600; }
.pill { width: 61px; height: 26px; border: 1px solid #d0d7de; border-radius: 13px; font-size: 15px; font-weight: 500; line-height: 24px; padding-left: 9px; margin: -3px 0 0 11px; }
.actions { margin: 1px 40px 0 auto; display: flex; gap: 10px; }
.btn { height: 35px; border: 1px solid #d5d9dd; border-radius: 7px; background: #f6f8fa; box-shadow: 0 1px 0 rgba(27,31,36,.05); display: flex; align-items: center; color: #24292f; font-size: 15px; font-weight: 600; }
.btn .ico { color: #57606a; }
.btn em { width: 26px; height: 26px; border-radius: 13px; background: #e6e8eb; text-align: center; line-height: 25px; margin-left: 6px; }
.notif { width: 150px; padding-left: 15px; gap: 11px; }
.forkbtn { width: 125px; padding-left: 16px; }
.forkbtn > .ico { margin-right: 11px; }
.starbtn { width: 168px; padding-left: 15px; }
.starbtn > .ico { margin-right: 15px; }
.drop { margin-left: auto; height: 33px; width: 42px; border-left: 1px solid #d5d9dd; display: flex; align-items: center; justify-content: center; color: #8b949e; }
.caret { border: 5px solid transparent; border-top-color: currentColor; border-bottom: 0; width: 0; height: 0; }
.repotabs { display: flex; height: 61px; margin: 0 0 -1px 40px; }
.repotabs > span { display: flex; align-items: center; gap: 8px; padding: 1px 20px 0; color: #24292f; }
.repotabs .ico { color: #6e7781; }
.repotabs .on { border-bottom: 2px solid #fd8c73; padding-top: 2px; font-weight: 600; }
.repotabs .on .ico { color: #24292f; }
.repotabs > span:nth-child(3) { gap: 9px; }
.repotabs > span:nth-child(4) { gap: 9px; padding-left: 21px; }

.content { display: flex; gap: 30px; padding: 30px 0 0 190px; }
.maincol { width: 1120px; }
.filenav { display: flex; align-items: center; height: 40px; }
.filenav .btn { height: 40px; font-size: 17.4px; padding-top: 2px; }
.mainbtn { width: 131px; padding-left: 20px; gap: 10px; margin-right: 20px; }
.mainbtn .caret { margin-left: -1px; margin-top: 3px; }
.filenav .cnt { margin: 0 20px 0 5px; }
.cnt { color: #57606a; }
.cnt b { color: #24292f; font-weight: 600; }
.goto { width: 140px; margin-left: auto; }
.filenav .green { width: 99px; background: #2da44e; border-color: #2a9749; color: #fff; margin-left: 11px; padding-left: 20px; gap: 4px; }
.files { border: 1px solid #d0d7de; border-radius: 8px; margin-top: 20px; overflow: hidden; height: 487px; }
.commit { height: 67px; background: #f6f8fa; display: flex; align-items: center; padding: 1px 21px 0 16px; }
.commit > .ico:first-child { margin-right: 16px; }
.commit b { font-weight: 600; }
.commit > b { margin-right: 4px; }
.commit .cnt { margin-left: 6px; }
.file { height: 46.3px; border-top: 1px solid #d8dee4; display: grid; grid-template-columns: 40px 1fr 92px; align-items: center; padding: 1px 21px 0 20px; }
.file:last-child { background: #f6f8fa; height: 48px; padding-bottom: 2px; }
.file .doc { color: #57606a; }
.file .dir { color: #54aeff; }
.ago { color: #57606a; }
.readme { margin-top: 20px; height: 200px; border: 1px solid #d0d7de; border-radius: 8px; padding: 22px 20px; font-weight: 600; }

.side { width: 370px; color: #57606a; }
.side h3 { margin: 1px 0 0; height: 30px; line-height: 30px; font-size: 18.5px; font-weight: 600; color: #24292f; }
.side p { margin: 20px 0 0; height: 30px; line-height: 30px; font-size: 15px; }
.side .desc { font-size: 19px; font-style: italic; }
.facts { margin-top: 18px; display: flex; flex-direction: column; gap: 6.4px; margin-bottom: 27px; }
.facts div { height: 30px; display: flex; align-items: center; }
.facts .ico { margin-right: 14px; }
.facts b { font-weight: 600; width: 14px; }
.side section { border-top: 1px solid #d8dee4; height: 134px; }
.side section h3 { margin-top: 31px; }
.side section p { margin-top: 15px; }
.langbar { display: flex; gap: 3px; height: 10px; margin-top: 19px; border-radius: 5px; overflow: hidden; }
.langbar i:first-child { width: 346px; background: #f1e05a; }
.langbar i:last-child { flex: 1; background: #e34c26; }
.langs { margin-top: 10px; font-size: 15px; display: flex; align-items: center; gap: 5px; height: 24px; }
.langs b { color: #24292f; font-weight: 600; }
.langs i { width: 10px; height: 10px; border-radius: 50%; background: #f1e05a; margin: 0 6px 0 5px; }
.langs i.html { background: #e34c26; margin-left: 22px; }

.edge { position: absolute; left: 566px; top: 48px; width: 627px; height: 1000px; border: 1px solid #666; background: #fff; box-shadow: 0 4px 20px rgba(0,0,0,.42); color: #111; }
.etabs { height: 50px; background: #cdcdcd; display: grid; grid-template-columns: 38px 9px 32px 34px 83px 32px 34px 9px 32px 34px 14px 81px 57px 57px 57px; padding: 10px 0 0 21px; align-items: center; font-size: 16.5px; border-bottom: 1px solid #bdbdbd; }
.bar { width: 1px; height: 25px; background: #777; }
.fade { width: 30px; overflow: hidden; mask-image: linear-gradient(to right, #000 60%, transparent); letter-spacing: -.6px; }
.etab { width: 77px; height: 40px; background: #f7f7f7; border-radius: 7px 7px 0 0; display: flex; align-items: center; gap: 21px; padding-left: 9px; }
.wbtn { height: 46px; margin-top: -14px; display: flex; justify-content: center; align-items: center; padding-top: 2px; }
.wbtn.hover { background: #b8b8b8; }
.ebar { height: 49px; background: #f7f7f7; border-bottom: 1px solid #bbb; display: flex; align-items: center; padding-left: 25px; }
.ebar > .ico:nth-child(2) { margin: 0 35px 0 35px; }
.off { color: #c6c6c6; }
.eaddr { width: 315px; height: 38px; margin: 0 25px 0 23px; background: #fff; border-radius: 6px; box-shadow: 0 0 3px rgba(0,0,0,.08); display: grid; grid-template-columns: 39px 181px 44px 30px; align-items: center; padding-left: 17px; color: #666; }
.host { color: #111; font-size: 18.5px; }
.host i { color: #777; }
.eaddr > .ico:last-child { margin-top: 3px; }
.ebar > .ico:last-child { margin-left: 34px; }
.ebody { display: flex; height: 882px; overflow: hidden; }
.app { width: 604px; flex: none; height: 882px; overflow: hidden; color: #212529; }
.edge .scroll { background: #f0f0f0; }
.edge .scroll .up { margin: 8px 0 8px; }
.edge .thumb { height: 511px; }
.navbar { height: 70px; background: #f8f9fa; display: flex; align-items: center; justify-content: space-between; padding: 0 15px; font-size: 24.5px; }
.burger { width: 70px; height: 49px; border: 1px solid #dfe0e1; border-radius: 5px; display: flex; flex-direction: column; align-items: center; justify-content: center; gap: 7.5px; padding-top: 1px; }
.burger i { width: 30px; height: 2.5px; background: #6b6d6f; }
.head { margin-top: 20px; border-top: 1px solid #c8c9ca; border-bottom: 1px solid #c8c9ca; height: 121px; padding-top: 20px; }
.head h2 { margin: 0; font-size: 31.5px; font-weight: 600; line-height: 40px; }
.head ul { margin: 10px 0 0; padding-left: 40px; font-size: 19.5px; line-height: 30px; }
.cards { padding: 39px 0 0 35px; }
.cards article { height: 207.6px; }
.cards h5 { margin: 0; font-size: 24px; font-weight: 600; line-height: 34px; }
.cards p { margin: 8px 0 0; font-size: 19.5px; line-height: 30px; }
.go { margin-top: 19px; width: 165px; height: 48px; background: #0d6efd; color: #fff; border-radius: 4px; font-size: 19.5px; line-height: 50px; padding-left: 16px; }
.tip { position: absolute; left: 455px; top: 46px; width: 67px; height: 24px; background: #ffffe1; border: 1px solid #555; font-size: 15.5px; line-height: 22px; padding-left: 2px; color: #111; }

.taskbar { position: relative; height: 50px; flex: none; display: flex; background: linear-gradient(90deg, #d4d8db 0, #d2d6de 29%, #e6e7e6 36%, #e9e9e8 60%, #d6d8d6 67%, #d8dad9 82%, #cfd7dd 100%); color: #111; }
.start { width: 60px; display: flex; align-items: center; padding-left: 19px; }
.tsearch { width: 430px; background: #fff; border: 1px solid #c4c4c4; display: flex; align-items: center; gap: 15px; padding: 1px 0 0 14px; font-size: 18.5px; color: #333; }
.tview { width: 64px; display: flex; align-items: center; padding-left: 19px; }
.app-slot { width: 62px; height: 50px; display: flex; align-items: center; justify-content: center; position: relative; }
.app-slot.active { background: #f4f5f6; width: 61px; }
.app-slot.open::after, .app-slot.active::after { content: ""; position: absolute; bottom: 0; left: 6px; right: 5px; height: 3px; background: #0078d7; }
.app-slot.active::after { left: 0; right: 0; }
.adobe { width: 28px; height: 28px; font-size: 15px; font-weight: 600; line-height: 24px; text-align: center; margin-top: -3px; letter-spacing: -.3px; }
.pr { background: #00005b; color: #9f9bff; border-radius: 5px; line-height: 27px; }
.ae { background: #1f0040; color: #cf96fd; border: 2px solid #cf96fd; }
.ps { background: #001d26; color: #00c8ff; border: 2px solid #00c8ff; }
.tray { margin-left: 144px; display: grid; grid-template-columns: 38px 49px 122px 28px 33px 30px 28px 29px 33px 99px 46px; align-items: center; font-size: 18px; }
.tray > span { margin-top: 2px; }
.clock { width: 76px; display: flex; flex-direction: column; align-items: center; font-size: 16px; line-height: 22px; }
.notes { position: relative; height: 50px; width: 47px; border-right: 1px solid #a9afb3; padding-top: 15px; }
.notes i { position: absolute; left: 8px; top: 23px; width: 23px; height: 22px; border: 1px solid #555; border-radius: 50%; background: #d0d3d5; font-size: 14px; font-weight: 600; line-height: 19px; text-align: center; letter-spacing: -.5px; }
</style>
